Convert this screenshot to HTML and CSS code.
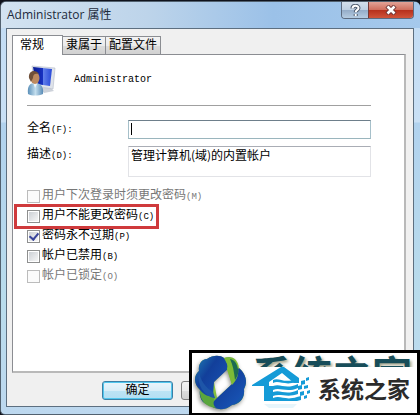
FILE: index.html
```html
<!DOCTYPE html>
<html lang="zh-CN">
<head>
    <meta charset="UTF-8">
    <meta name="viewport" content="width=device-width, initial-scale=1.0">
    <title>Administrator 属性</title>
    <link rel="stylesheet" href="styles.css">
</head>
<body>
    <div class="window">
        <header class="title-bar">
            <h1>Administrator 属性</h1>
            <div class="window-buttons">
                <button type="button" class="help" aria-label="帮助">
                    <svg width="11" height="13" viewBox="0 0 11 13">
                        <path d="M2.5 4.5C2.5 1 8.5 1 8.5 4C8.5 6 5.7 5.7 5.7 8.3M5.7 10V12" fill="none" stroke="#4c596c" stroke-width="4"/>
                        <path d="M2.5 4.5C2.5 1 8.5 1 8.5 4C8.5 6 5.7 5.7 5.7 8.3M5.7 10V12" fill="none" stroke="#fff" stroke-width="2"/>
                    </svg>
                </button>
                <button type="button" class="close" aria-label="关闭">
                    <svg width="12" height="10" viewBox="0 0 12 10">
                        <path d="M2 1L10 9M10 1L2 9" fill="none" stroke="#6d3535" stroke-width="4.5"/>
                        <path d="M2.5 1.5L9.5 8.5M9.5 1.5L2.5 8.5" fill="none" stroke="#fff" stroke-width="2.6"/>
                    </svg>
                </button>
            </div>
        </header>

        <form class="client">
            <div class="tabs" role="tablist">
                <button type="button" class="tab active" role="tab" aria-selected="true">常规</button>
                <button type="button" class="tab" role="tab">隶属于</button>
                <button type="button" class="tab" role="tab">配置文件</button>
            </div>

            <div class="panel" role="tabpanel">
                <div class="user">
                    <svg width="30" height="32" viewBox="0 0 30 32">
                        <defs>
                            <linearGradient id="screen" x1="0" y1="0" x2="1" y2="0">
                                <stop offset="0" stop-color="#081a91"/>
                                <stop offset="0.5" stop-color="#1731c0"/>
                                <stop offset="0.55" stop-color="#5f7eea"/>
                                <stop offset="1" stop-color="#2748d8"/>
                            </linearGradient>
                            <linearGradient id="shirt" x1="0" y1="0" x2="1" y2="0">
                                <stop offset="0" stop-color="#5a8fb8"/>
                                <stop offset="0.5" stop-color="#c3deee"/>
                                <stop offset="1" stop-color="#5689b4"/>
                            </linearGradient>
                        </defs>
                        <path d="M14 24L23 23L27 27L17 29Z" fill="#cdd2da"/>
                        <path d="M5 2L28 4L26 25L8 22Z" fill="#dfe3ea" stroke="#b5bcc9" stroke-width="0.6"/>
                        <path d="M6 3L25 5L23 22L9 20Z" fill="url(#screen)"/>
                        <path d="M1 30C0 22 3 19 8 19C14 19 17 23 16 30C11 32 5 32 1 30Z" fill="url(#shirt)"/>
                        <path d="M6 18L8 24L11 18Z" fill="#eef6fa"/>
                        <ellipse cx="8" cy="14" rx="4.5" ry="6" fill="#bd8a60"/>
                        <path d="M2 14C1 6 9 5 12 10C8 9 6 10 6 14L4 18Z" fill="#705039"/>
                    </svg>
                    <span>Administrator</span>
                </div>

                <div class="fields">
                    <label for="fullName">全名<span class="key">(F):</span></label>
                    <div class="name-box">
                        <input type="text" id="fullName" name="fullName">
                    </div>
                    <label for="description">描述<span class="key">(D):</span></label>
                    <textarea id="description" name="description">管理计算机(域)的内置帐户</textarea>
                </div>

                <div class="options">
                    <div class="option disabled">
                        <input type="checkbox" id="mustChange" disabled>
                        <label for="mustChange">用户下次登录时须更改密码<span class="key">(M)</span></label>
                    </div>
                    <div class="option highlight">
                        <input type="checkbox" id="cannotChange">
                        <label for="cannotChange">用户不能更改密码<span class="key">(C)</span></label>
                    </div>
                    <div class="option">
                        <input type="checkbox" id="neverExpires" checked>
                        <label for="neverExpires">密码永不过期<span class="key">(P)</span></label>
                    </div>
                    <div class="option">
                        <input type="checkbox" id="accountDisabled">
                        <label for="accountDisabled">帐户已禁用<span class="key">(B)</span></label>
                    </div>
                    <div class="option disabled">
                        <input type="checkbox" id="accountLocked" disabled>
                        <label for="accountLocked">帐户已锁定<span class="key">(O)</span></label>
                    </div>
                </div>
            </div>

            <div class="actions">
                <button type="button" class="action default">确定</button>
                <button type="button" class="action" aria-label="取消"></button>
            </div>
        </form>
    </div>

    <div class="watermark">
        <svg class="ring" width="58" height="60" viewBox="0 0 58 60">
            <defs>
                <linearGradient id="blue" x1="0" y1="0" x2="1" y2="1">
                    <stop offset="0" stop-color="#1f7fb4"/>
                    <stop offset="0.35" stop-color="#123f9a"/>
                    <stop offset="0.75" stop-color="#1750b0"/>
                    <stop offset="1" stop-color="#0b6c9c"/>
                </linearGradient>
                <linearGradient id="green" x1="0" y1="0" x2="1" y2="1">
                    <stop offset="0" stop-color="#1d6b63"/>
                    <stop offset="0.5" stop-color="#8fca3c"/>
                    <stop offset="1" stop-color="#15734e"/>
                </linearGradient>
            </defs>
            <path class="ring-body" fill-rule="evenodd" d="M14 5C20 1 27 1 31 4C40 1 45 6 46 14C53 20 55 28 51 35C52 44 47 50 39 51C32 57 22 56 17 51C8 50 6 42 7 36C0 29 1 21 6 17C5 10 9 5 14 5ZM34 15L21 28L24 44L39 30Z" fill="url(#green)"/>
            <path d="M14 5C20 1 27 1 31 4L36 14L21 28L20 42L17 51C8 50 6 42 7 36C0 29 1 21 6 17C5 10 9 5 14 5Z" fill="url(#blue)"/>
            <path d="M46 14C53 20 55 28 51 35C52 44 47 50 39 51C32 57 22 56 17 51L24 44L39 30L41 20Z" fill="url(#blue)"/>
            <path d="M31 4C39 2 44 6 45 14C46 20 44 26 39 31L34 15C35 11 34 7 31 4Z" fill="#7dbb35"/>
            <path d="M37 5C42 6 44 10 45 15C46 19 44 23 42 26C41 18 40 11 37 5Z" fill="#1c6b52"/>
            <path d="M7 36C11 41 16 43 22 43C20 49 20 51 23 54C13 53 6 46 7 36Z" fill="#5aa63c"/>
            <path d="M6 17C7 26 12 33 20 38L22 44C12 43 3 31 6 17Z" fill="#1d55a8"/>
        </svg>
        <div class="brush" aria-hidden="true">系统之家</div>
        <div class="brand">
            <svg width="63" height="44" viewBox="0 0 63 44">
                <path d="M1 19L30 1H33L48 12V17H43L31 7L18 16V20H1Z" fill="#159bd7"/>
                <path d="M13 20H22V35H13Z" fill="#159bd7"/>
                <path d="M22 14C28 11 33 18 45 13V16C34 20 28 14 22 17ZM22 20C30 17 34 24 47 18V22C36 27 29 21 22 24ZM22 26C30 23 34 30 47 24V28C36 32 29 27 22 30ZM22 32C30 29 34 35 46 31V35H22Z" fill="#159bd7"/>
                <path d="M50 15L54 14V18L50 19ZM55 12L58 11V14L55 15ZM47 20L51 19V23L47 24ZM53 20L57 19V22L53 23ZM49 26L53 25V29L49 30ZM56 25L59 24V27L56 28ZM46 31L50 30V34L46 35ZM53 30L56 29V32L53 33Z" fill="#159bd7"/>
                <path d="M13 38H46L42 42H18Z" fill="#e7f5fb"/>
            </svg>
            <span>系统之家</span>
        </div>
    </div>
</body>
</html>
```
FILE: styles.css
```css
*,
*::before,
*::after {
    box-sizing: border-box;
}

body {
    position: relative;
    min-height: 100vh;
    margin: 0;
    display: flex;
    background-color: #10131c;
    font-family: "Liberation Mono", "Noto Sans CJK SC", monospace;
    font-size: 12px;
    line-height: 16px;
    color: #000;
}

button,
input,
textarea {
    font: inherit;
    color: inherit;
    margin: 0;
    padding: 0;
}

.window {
    flex: 1;
    display: flex;
    flex-direction: column;
    margin-top: 1px;
    padding: 0 6px 7px 5px;
    border: 1px solid #52616f;
    border-width: 1px 0 1px 1px;
    border-radius: 6px 6px 5px 5px;
    background: linear-gradient(#c2dcf4 0, #c9e0f5 120px, #b1d2ee 121px, #b9dcec 300px, #bdd8ef 100%);
}

.title-bar {
    display: flex;
    justify-content: space-between;
    height: 26px;
    margin: 0 -6px 0 -5px;
    padding: 0 6px;
    border-radius: 5px 5px 0 0;
    background: linear-gradient(90deg, #d3e3f1 0, #bdd4ea 35%, #9bc1e8 65%, #a5c9ec 100%);
}

.title-bar h1 {
    margin: 0;
    font-family: "Open Sans", "Noto Sans CJK SC", sans-serif;
    font-size: 12px;
    font-weight: normal;
    line-height: 25px;
    color: #1c2a3b;
}

.window-buttons {
    display: flex;
    height: 17px;
    border: 1px solid #5c6b80;
    border-top: 0;
    border-radius: 0 0 4px 4px;
    overflow: hidden;
}

.window-buttons button {
    display: flex;
    align-items: center;
    justify-content: center;
    border: 0;
}

.window-buttons .help {
    width: 26px;
    background: linear-gradient(#d3dfec 0, #bdcfe2 50%, #94acc8 51%, #b5cce2 100%);
}

.window-buttons .close {
    width: 45px;
    border-left: 1px solid #743937;
    background: linear-gradient(#e2a397 0, #d06f5e 48%, #b62f1b 50%, #d0543a 100%);
}

.client {
    flex: 1;
    display: flex;
    flex-direction: column;
    padding: 6px 7px 6px 5px;
    border: 1px solid #5d6f80;
    background-color: #f0f0f0;
}

.tabs {
    display: flex;
    align-items: flex-end;
}

.tab {
    height: 18px;
    padding: 0 3px;
    border: 1px solid #8b8d92;
    border-width: 1px 1px 0 0;
    background: linear-gradient(#f3f3f3 0, #ebebeb 50%, #dcdcdc 51%, #d1d1d1 100%);
    line-height: 18px;
}

.tab.active {
    position: relative;
    height: 20px;
    padding: 0 18px 0 7px;
    margin-bottom: -1px;
    border-left-width: 1px;
    background: #fff;
}

.panel {
    flex: 1;
    padding: 8px 33px 8px 14px;
    border: 1px solid #8b8d92;
    border-width: 1px 2px 2px 1px;
    border-right-color: #b9b9b9;
    border-bottom-color: #b9b9b9;
    background-color: #fff;
}

.user {
    display: flex;
    align-items: center;
    gap: 17px;
    height: 43px;
    padding-bottom: 8px;
    border-bottom: 1px solid #a0a0a0;
    font-size: 10px;
}

.fields {
    display: grid;
    grid-template-columns: 101px 1fr;
    gap: 7px 0;
    margin-top: 14px;
}

.fields label {
    line-height: 18px;
}

.key {
    font-size: 9px;
}

.name-box {
    display: flex;
}

.fields input,
.fields textarea {
    display: block;
    width: 100%;
    border: 1px solid #e2e3e7;
    border-top-color: #aaadb5;
    padding: 0 2px;
    background-color: #fff;
    outline: 0;
    resize: none;
}

/* the bar at the left is the text cursor */
.fields input {
    height: 19px;
    border-color: #6e7f8b #a6c0ca #9ab5bd #a6c0ca;
    background: #fff linear-gradient(#000, #000) 2px 2px / 1px 12px no-repeat;
    caret-color: transparent;
}

.fields textarea {
    height: 31px;
    font-family: "Noto Sans CJK SC", sans-serif;
    font-size: 12px;
    overflow: hidden;
}

.options {
    display: flex;
    flex-direction: column;
    gap: 4px;
    margin-top: 11px;
}

.option {
    display: flex;
    align-items: center;
    gap: 2px;
    height: 16px;
}

.option.disabled {
    color: #777;
}

.option input {
    appearance: none;
    width: 13px;
    height: 13px;
    border: 1px solid #8e8f8f;
    background: #fff linear-gradient(135deg, #ccd0d5, #f6f6f6) center / 9px 9px no-repeat;
}

.option input:disabled {
    border-color: #bcbcbc;
    background: #fbfbfb;
}

.option input:checked::before {
    content: "";
    display: block;
    width: 6px;
    height: 9px;
    margin: 0 0 0 3px;
    border: solid #39459b;
    border-width: 0 2px 2px 0;
    transform: rotate(40deg);
}

/* red frame drawn around the option to pick */
.highlight {
    position: relative;
}

.highlight::after {
    content: "";
    position: absolute;
    top: -4px;
    left: -13px;
    width: 145px;
    height: 25px;
    border: 3px solid #cf3a3c;
    pointer-events: none;
}

.actions {
    display: flex;
    gap: 8px;
    margin-top: 8px;
    padding-left: 90px;
}

.action {
    width: 71px;
    height: 19px;
    border: 1px solid #808080;
    border-radius: 3px;
    background: linear-gradient(#f3f3f3 0, #ebebeb 50%, #dcdcdc 51%, #d0d0d0 100%);
    line-height: 16px;
}

.action.default {
    border-color: #3c7fa5;
    box-shadow: inset 0 0 0 1px #51c7ee;
    background: linear-gradient(#eaf5fb 0, #d9eef8 50%, #bce4f5 51%, #b4dff3 100%);
}

.watermark {
    position: absolute;
    right: 0;
    bottom: 0;
    width: 231px;
    height: 65px;
    border: 3px solid #000;
    border-bottom-width: 2px;
    background-color: #fff;
    overflow: hidden;
}

.ring {
    position: absolute;
    top: 1px;
    left: 1px;
}

.ring-body {
    filter: drop-shadow(-1px 2px 2px #8f8f88);
}

.brush {
    position: absolute;
    top: 0;
    left: 60px;
    font-family: "Noto Sans CJK SC", sans-serif;
    font-size: 40px;
    font-weight: bold;
    line-height: 40px;
    white-space: nowrap;
    color: #174d59;
    text-shadow: 2px 2px 3px #a8a78e;
}

.brand {
    position: absolute;
    right: 0;
    bottom: 0;
    left: 59px;
    display: flex;
    align-items: center;
    gap: 4px;
    height: 46px;
    padding-bottom: 4px;
    background-color: #fff;
    font-family: "Noto Sans CJK SC", sans-serif;
    font-size: 23px;
    font-weight: bold;
    line-height: 32px;
    white-space: nowrap;
    color: #2b2b2b;
}
```
